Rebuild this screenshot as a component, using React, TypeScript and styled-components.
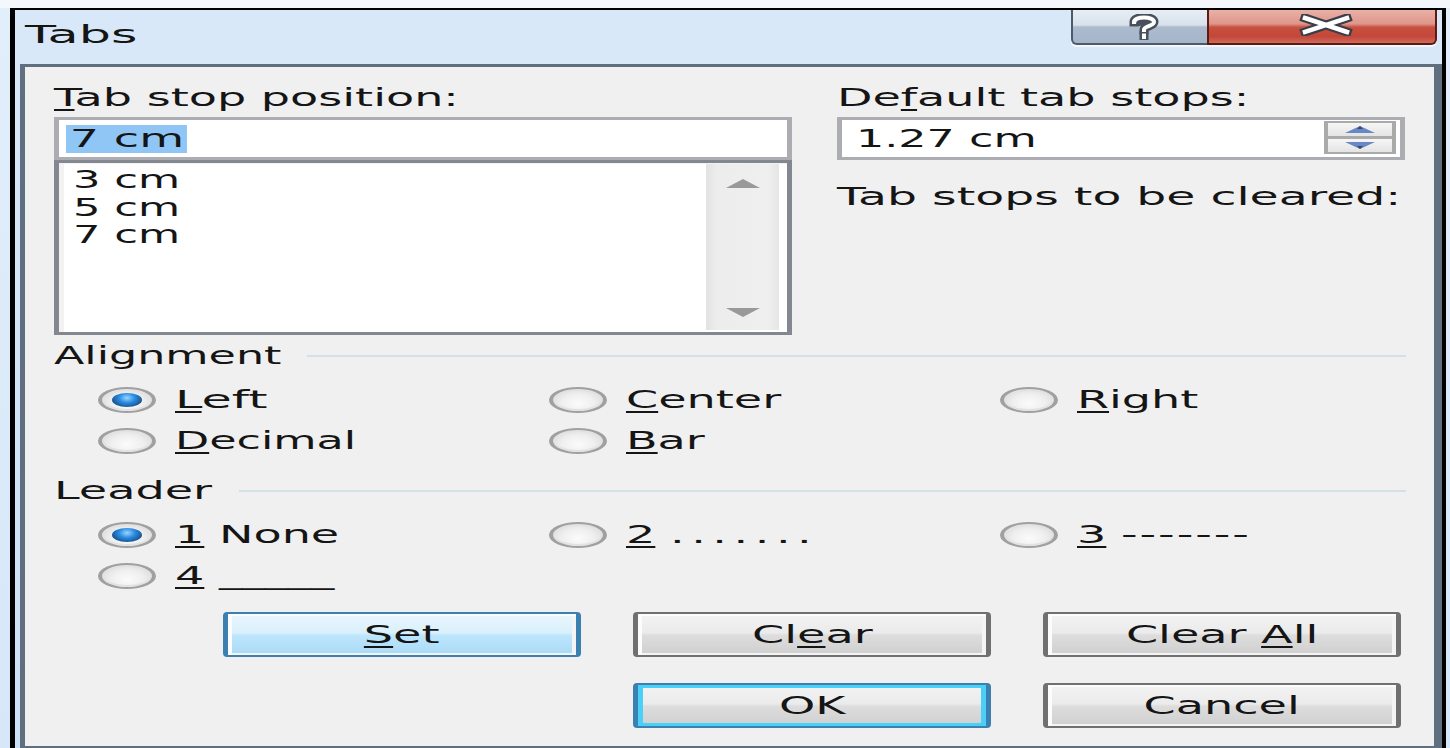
import React from 'react'
import styled, { createGlobalStyle, css } from 'styled-components'

// the classic dialog font is rendered wide, so every text run is stretched horizontally
const STRETCH = 1.92

const GlobalStyle = createGlobalStyle`
  html, body {
    margin: 0;
    padding: 0;
  }
  body {
    width: 1450px;
    height: 748px;
    overflow: hidden;
    background: linear-gradient(180deg, #f4f8fd 0px, #f4f8fd 8px, #e2eefa 8px, #d6e7f8 100%);
    font-family: 'DejaVu Sans', Verdana, sans-serif;
    font-size: 24px;
    line-height: 28px;
    color: #151515;
  }
`

const Desktop = styled.div`
  padding: 8px 0 0 10px;
`

const Window = styled.div`
  box-sizing: border-box;
  width: 1436px;
  height: 740px;
  border-style: solid;
  border-color: #000;
  border-width: 2px 4px 0 5px;
  padding-left: 5px;
  background: linear-gradient(180deg, #d9e8f9 0%, #cde1f6 100%);
  display: flex;
  flex-direction: column;
`

const TitleBar = styled.div`
  height: 54px;
  flex: none;
  display: flex;
  justify-content: space-between;
  align-items: flex-start;
`

const Title = styled.div`
  padding: 11px 0 0 5px;
  font-size: 25px;
`

const Caption = styled.div`
  display: flex;
  margin-right: 5px;
  box-shadow: 0 2px 1px rgba(255, 255, 255, 0.7);
  border-radius: 0 0 5px 5px;
`

const HelpButton = styled.div`
  box-sizing: border-box;
  width: 136px;
  height: 35px;
  border: 2px solid #4e5a67;
  border-top: none;
  border-right: none;
  border-bottom-left-radius: 6px;
  background: linear-gradient(180deg, #e6edf5 0%, #d9e2ec 45%, #abbacd 52%, #a6b6ca 100%);
  display: flex;
  align-items: center;
  justify-content: center;
  padding-left: 8px;
`

const CloseButton = styled.div`
  box-sizing: border-box;
  width: 230px;
  height: 35px;
  border: 2px solid #5d1a12;
  border-top: none;
  border-bottom-right-radius: 6px;
  background: linear-gradient(180deg, #eab0a6 0%, #df968a 42%, #c7513f 52%, #c3473a 80%, #cf6a5b 100%);
  display: flex;
  align-items: center;
  justify-content: center;
`

const Client = styled.div`
  box-sizing: border-box;
  flex: 1;
  border-style: solid;
  border-color: #5f6f80;
  border-width: 3px 8px 2px 5px;
  background: #f0f0f0;
`

const Txt = styled.span<{ $sx?: number; $center?: boolean }>`
  display: inline-block;
  white-space: pre;
  transform: scaleX(${({ $sx }) => $sx ?? STRETCH});
  transform-origin: ${({ $center }) => ($center ? 'center' : 'left')} center;

  u {
    text-decoration-thickness: 2px;
    text-underline-offset: 3px;
  }
`

const Selection = styled(Txt)`
  background: #8fc6f6;
  padding: 0 2px;
  margin-left: -2px;
`

const TopGrid = styled.div`
  display: grid;
  grid-template-columns: 738px 568px;
  column-gap: 45px;
  padding: 17px 29px 0;
`

const Column = styled.div`
  display: flex;
  flex-direction: column;
`

const Label = styled.div<{ $gap?: number }>`
  height: 28px;
  margin-top: ${({ $gap }) => $gap ?? 0}px;
`

const Field = styled.div`
  box-sizing: border-box;
  height: 43px;
  margin-top: 5px;
  border-style: solid;
  border-color: #abadb3;
  border-width: 3px 5px;
  background: #fff;
  display: flex;
  align-items: center;
`

const EditText = styled.div<{ $pad: number }>`
  padding: 1px 0 0 ${({ $pad }) => $pad}px;
`

const ListBox = styled.div`
  box-sizing: border-box;
  height: 175px;
  border-style: solid;
  border-color: #828790;
  border-width: 3px 5px;
  background: #fff;
  box-shadow: inset 5px 1px 0 #f2f2f2;
  display: flex;
`

const Items = styled.div`
  flex: 1;
  padding: 3px 0 0 14px;
`

const Item = styled.div`
  height: 27.5px;
`

const ScrollBar = styled.div`
  width: 73px;
  margin: 1px 8px 2px 0;
  background: linear-gradient(90deg, #e2e2e2 0%, #ededed 15%, #efefef 85%, #e6e6e6 100%);
  display: flex;
  flex-direction: column;
  justify-content: space-between;
  align-items: center;
  padding: 15px 0 13px;
`

const Spinner = styled.div`
  box-sizing: border-box;
  width: 72px;
  height: 33px;
  margin: 1px 4px 0 auto;
  align-self: flex-start;
  background: #aaaaaa;
  padding: 2px 4px;
  display: flex;
  flex-direction: column;
  gap: 3px;
`

const SpinHalf = styled.div`
  flex: 1;
  background: linear-gradient(180deg, #f6f6f6 0%, #e4e4e4 100%);
  display: flex;
  align-items: center;
  justify-content: center;
`

const GroupHead = styled.div<{ $gap: number }>`
  display: flex;
  align-items: center;
  height: 28px;
  margin-top: ${({ $gap }) => $gap}px;
  padding: 0 28px 0 29px;
`

const Legend = styled.div<{ $w: number }>`
  width: ${({ $w }) => $w}px;
  flex: none;
`

const Rule = styled.div`
  flex: 1;
  height: 2px;
  background: #d5dfe6;
`

const RadioGrid = styled.div`
  display: grid;
  grid-template-columns: repeat(3, 451px);
  grid-auto-rows: 40.5px;
  margin-top: 10px;
  padding-left: 73px;
`

const Choice = styled.div`
  display: flex;
  align-items: center;
  gap: 19px;
`

const Radio = styled.span<{ $on?: boolean }>`
  position: relative;
  box-sizing: border-box;
  flex: none;
  width: 58px;
  height: 26px;
  border-radius: 50%;
  border: 2px solid #a0a0a0;
  border-left-width: 4px;
  border-right-width: 4px;
  background: radial-gradient(ellipse at 50% 65%, #fbfbfb 0%, #efefef 45%, #d2d2d2 100%);
  box-shadow: inset 0 0 0 2px #e2e2e2;

  ${({ $on }) =>
    $on &&
    css`
      &::after {
        content: '';
        position: absolute;
        left: 50%;
        top: 50%;
        width: 30px;
        height: 14px;
        transform: translate(-50%, -50%);
        border-radius: 50%;
        background: radial-gradient(ellipse at 50% 35%, #9ad6ff 0%, #2a8be2 38%, #1b5a98 70%, #173a5e 100%);
      }
    `}
`

const LeaderMarks = styled.span<{ $spacing: number }>`
  letter-spacing: ${({ $spacing }) => $spacing}px;
`

const ButtonGrid = styled.div`
  display: grid;
  grid-template-columns: repeat(3, 358px);
  column-gap: 52px;
  row-gap: 26px;
  margin-top: 16px;
  padding-left: 198px;
`

const Button = styled.div<{ $variant?: 'hot' | 'default'; $col?: number }>`
  box-sizing: border-box;
  height: 45px;
  grid-column: ${({ $col }) => ($col ? `${$col}` : 'auto')};
  border: 2px solid #707070;
  border-left-width: 5px;
  border-right-width: 5px;
  border-radius: 4px;
  background: linear-gradient(180deg, #f3f3f3 0%, #ebebeb 46%, #dddddd 52%, #cfcfcf 100%);
  box-shadow: inset 4px 2px 0 #fcfcfc, inset -4px -2px 0 #f4f4f4;
  display: flex;
  align-items: center;
  justify-content: center;

  ${({ $variant }) =>
    $variant === 'hot' &&
    css`
      border-color: #3c7fb1;
      background: linear-gradient(180deg, #eaf6fd 0%, #d9f0fc 46%, #bee6fd 52%, #a9daf6 100%);
    `}

  ${({ $variant }) =>
    $variant === 'default' &&
    css`
      border-color: #3c7fb1;
      box-shadow: inset 5px 0 0 #4acff6, inset -5px 0 0 #4acff6, inset 0 3px 0 #4acff6, inset 0 -3px 0 #4acff6;
    `}
`

function HelpGlyph() {
  return (
    <svg width="40" height="26" viewBox="0 0 40 26">
      <g fill="none" strokeLinecap="square">
        <path d="M10 8 C10 2 30 2 30 8 C30 12 20 12 20 15.5 L20 16" stroke="#48515b" strokeWidth="9" />
        <path d="M20 21.5 L20 23" stroke="#48515b" strokeWidth="9" />
        <path d="M10 8 C10 2 30 2 30 8 C30 12 20 12 20 15.5 L20 16" stroke="#fff" strokeWidth="4" />
        <path d="M20 21.5 L20 23" stroke="#fff" strokeWidth="4" />
      </g>
    </svg>
  )
}

function CloseGlyph() {
  return (
    <svg width="56" height="22" viewBox="0 0 56 22" style={{ marginLeft: 8, marginTop: -4 }}>
      <g fill="none" strokeLinecap="square">
        <path d="M7 4 L49 18 M49 4 L7 18" stroke="#3a3e48" strokeWidth="9" />
        <path d="M7 4 L49 18 M49 4 L7 18" stroke="#fff" strokeWidth="4.5" />
      </g>
    </svg>
  )
}

function ScrollArrow({ down }: { down?: boolean }) {
  return (
    <svg width="34" height="9" viewBox="0 0 34 9">
      <polygon points={down ? '0,0 34,0 17,9' : '17,0 34,9 0,9'} fill="#8a8a8a" opacity="0.85" />
    </svg>
  )
}

function SpinArrow({ down }: { down?: boolean }) {
  return (
    <svg width="30" height="7" viewBox="0 0 30 7">
      <polygon points={down ? '0,0 30,0 15,7' : '15,0 30,7 0,7'} fill="#6787c6" />
      <polygon points={down ? '12,4 18,4 15,7' : '15,0 18,3 12,3'} fill="#3d4a5c" />
    </svg>
  )
}

type Option = { label: React.ReactNode; on?: boolean; sx?: number }

function RadioRow({ options }: { options: Option[] }) {
  return (
    <RadioGrid>
      {options.map((o, i) => (
        <Choice key={i}>
          <Radio $on={o.on} />
          <Txt $sx={o.sx}>{o.label}</Txt>
        </Choice>
      ))}
    </RadioGrid>
  )
}

const alignment: Option[] = [
  { label: <><u>L</u>eft</>, on: true, sx: 2.05 },
  { label: <><u>C</u>enter</> },
  { label: <><u>R</u>ight</> },
  { label: <><u>D</u>ecimal</>, sx: 1.85 },
  { label: <><u>B</u>ar</> },
]

const leader: Option[] = [
  { label: <><u>1</u> None</>, on: true },
  { label: <><u>2</u> <LeaderMarks $spacing={3.4}>.......</LeaderMarks></> },
  { label: <><u>3</u> <LeaderMarks $spacing={1}>-------</LeaderMarks></> },
  { label: <><u>4</u> _____</> },
]

export default function App() {
  return (
    <>
      <GlobalStyle />
      <Desktop>
        <Window>
          <TitleBar>
            <Title>
              <Txt $sx={2.03}>Tabs</Txt>
            </Title>
            <Caption>
              <HelpButton>
                <HelpGlyph />
              </HelpButton>
              <CloseButton>
                <CloseGlyph />
              </CloseButton>
            </Caption>
          </TitleBar>
          <Client>
            <TopGrid>
              <Column>
                <Label>
                  <Txt>
                    <u>T</u>ab stop position:
                  </Txt>
                </Label>
                <Field>
                  <EditText $pad={9}>
                    <Selection>7 cm</Selection>
                  </EditText>
                </Field>
                <ListBox>
                  <Items>
                    {['3 cm', '5 cm', '7 cm'].map((s) => (
                      <Item key={s}>
                        <Txt $sx={1.8}>{s}</Txt>
                      </Item>
                    ))}
                  </Items>
                  <ScrollBar>
                    <ScrollArrow />
                    <ScrollArrow down />
                  </ScrollBar>
                </ListBox>
              </Column>
              <Column>
                <Label>
                  <Txt>
                    De<u>f</u>ault tab stops:
                  </Txt>
                </Label>
                <Field>
                  <EditText $pad={14}>
                    <Txt $sx={1.85}>1.27 cm</Txt>
                  </EditText>
                  <Spinner>
                    <SpinHalf>
                      <SpinArrow />
                    </SpinHalf>
                    <SpinHalf>
                      <SpinArrow down />
                    </SpinHalf>
                  </Spinner>
                </Field>
                <Label $gap={23}>
                  <Txt $sx={1.97}>Tab stops to be cleared:</Txt>
                </Label>
              </Column>
            </TopGrid>

            <GroupHead $gap={7}>
              <Legend $w={253}>
                <Txt $sx={1.85}>Alignment</Txt>
              </Legend>
              <Rule />
            </GroupHead>
            <RadioRow options={alignment} />

            <GroupHead $gap={16}>
              <Legend $w={185}>
                <Txt>Leader</Txt>
              </Legend>
              <Rule />
            </GroupHead>
            <RadioRow options={leader} />

            <ButtonGrid>
              <Button $variant="hot">
                <Txt $center>
                  <u>S</u>et
                </Txt>
              </Button>
              <Button>
                <Txt $center>
                  Cl<u>e</u>ar
                </Txt>
              </Button>
              <Button>
                <Txt $center>
                  Clear <u>A</u>ll
                </Txt>
              </Button>
              <Button $variant="default" $col={2}>
                <Txt $center>OK</Txt>
              </Button>
              <Button $col={3}>
                <Txt $center>Cancel</Txt>
              </Button>
            </ButtonGrid>
          </Client>
        </Window>
      </Desktop>
    </>
  )
}
